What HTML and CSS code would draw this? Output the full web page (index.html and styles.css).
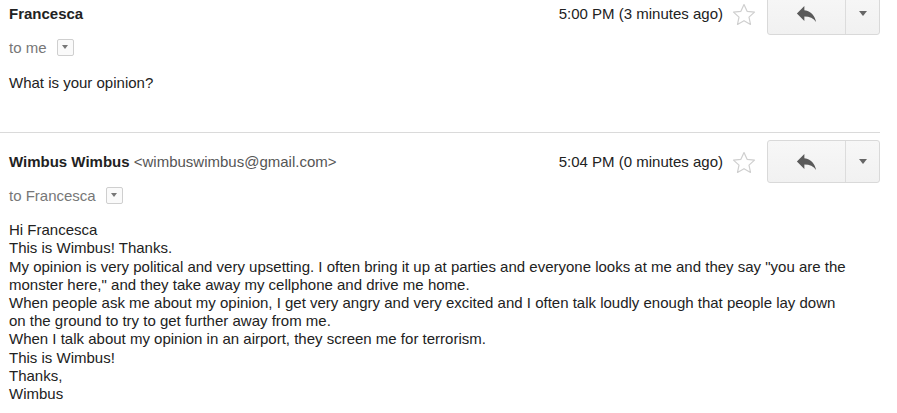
FILE: index.html
```html
<!DOCTYPE html>
<html>
<head>
<meta charset="utf-8">
<link rel="stylesheet" href="styles.css">
</head>
<body>
<div class="thread">
  <div class="msg first">
    <div class="head">
      <div class="from"><span class="name">Francesca</span></div>
      <div class="meta">
        <span class="time">5:00 PM (3 minutes ago)</span>
        <svg class="star" width="24" height="23" viewBox="0 0 24 23"><path d="M12 1.5l3.1 6.8 7.4.8-5.5 5 1.5 7.3L12 17.7l-6.5 3.7 1.5-7.3-5.5-5 7.4-.8z" fill="none" stroke="#cfcfcf" stroke-width="1.2" stroke-linejoin="round"/></svg>
        <div class="btns">
          <div class="btn reply"><svg width="23" height="16" viewBox="3 5 18 15"><path d="M10 9V5l-7 7 7 7v-4.1c5 0 8.5 1.6 11 5.1-1-5-4-10-11-11z" fill="#5a5a5a"/></svg></div>
          <div class="btn more"><span class="tri"></span></div>
        </div>
      </div>
    </div>
    <div class="to">to me <span class="dd"><span class="tri small"></span></span></div>
    <div class="body">What is your opinion?</div>
  </div>
  <div class="msg second">
    <div class="head">
      <div class="from"><span class="name">Wimbus Wimbus</span> <span class="email">&lt;wimbuswimbus@gmail.com&gt;</span></div>
      <div class="meta">
        <span class="time">5:04 PM (0 minutes ago)</span>
        <svg class="star" width="24" height="23" viewBox="0 0 24 23"><path d="M12 1.5l3.1 6.8 7.4.8-5.5 5 1.5 7.3L12 17.7l-6.5 3.7 1.5-7.3-5.5-5 7.4-.8z" fill="none" stroke="#cfcfcf" stroke-width="1.2" stroke-linejoin="round"/></svg>
        <div class="btns">
          <div class="btn reply"><svg width="23" height="16" viewBox="3 5 18 15"><path d="M10 9V5l-7 7 7 7v-4.1c5 0 8.5 1.6 11 5.1-1-5-4-10-11-11z" fill="#5a5a5a"/></svg></div>
          <div class="btn more"><span class="tri"></span></div>
        </div>
      </div>
    </div>
    <div class="to">to Francesca <span class="dd"><span class="tri small"></span></span></div>
    <div class="body">Hi Francesca<br>This is Wimbus! Thanks.<br>My opinion is very political and very upsetting. I often bring it up at parties and everyone looks at me and they say "you are the monster here," and they take away my cellphone and drive me home.<br>When people ask me about my opinion, I get very angry and very excited and I often talk loudly enough that people lay down on the ground to try to get further away from me.<br>When I talk about my opinion in an airport, they screen me for terrorism.<br>This is Wimbus!<br>Thanks,<br>Wimbus</div>
  </div>
</div>
</body>
</html>
```

FILE: styles.css
```css
html, body {
  margin: 0;
  padding: 0;
  background: #fff;
}
body {
  font-family: "Liberation Sans", Arial, sans-serif;
  font-size: 15px;
  color: #222;
  overflow: hidden;
}
.thread {
  width: 880px;
  margin-top: -8px;
}
.msg.first {
  border-bottom: 1px solid #dadada;
  padding-bottom: 40px;
}
.msg.second {
  margin-top: 7px;
}
.head {
  height: 43px;
  display: flex;
  align-items: center;
  justify-content: space-between;
  padding-left: 9px;
}
.name {
  font-weight: bold;
  color: #222;
}
.email {
  color: #555;
}
.meta {
  display: flex;
  align-items: center;
  height: 43px;
}
.time {
  color: #222;
  margin-right: 9px;
}
.star {
  margin-right: 11px;
  margin-top: 2px;
}
.btns {
  display: flex;
  height: 43px;
  box-sizing: border-box;
  border: 1px solid #d9d9d9;
  border-radius: 3px;
  background: linear-gradient(#f7f7f7, #f1f1f1);
}
.btn {
  display: flex;
  align-items: center;
  justify-content: center;
}
.btn.reply {
  width: 77px;
  border-right: 1px solid #dcdcdc;
  padding-top: 1px;
}
.btn.more {
  width: 33px;
}
.tri {
  width: 0;
  height: 0;
  border-left: 4.5px solid transparent;
  border-right: 4.5px solid transparent;
  border-top: 5px solid #666;
}
.tri.small {
  border-left-width: 3.5px;
  border-right-width: 3.5px;
  border-top-width: 4px;
  border-top-color: #777;
}
.to {
  height: 24px;
  display: flex;
  align-items: center;
  padding-left: 9px;
  color: #777;
  gap: 10px;
}
.dd {
  width: 15px;
  height: 15px;
  border: 1px solid #cfcfcf;
  border-radius: 2px;
  background: #fafafa;
  display: flex;
  align-items: center;
  justify-content: center;
}
.body {
  padding-left: 9px;
  line-height: 18.2px;
  color: #222;
}
.first .body {
  margin-top: 15px;
}
.second .body {
  margin-top: 14px;
  width: 842px;
}
```
